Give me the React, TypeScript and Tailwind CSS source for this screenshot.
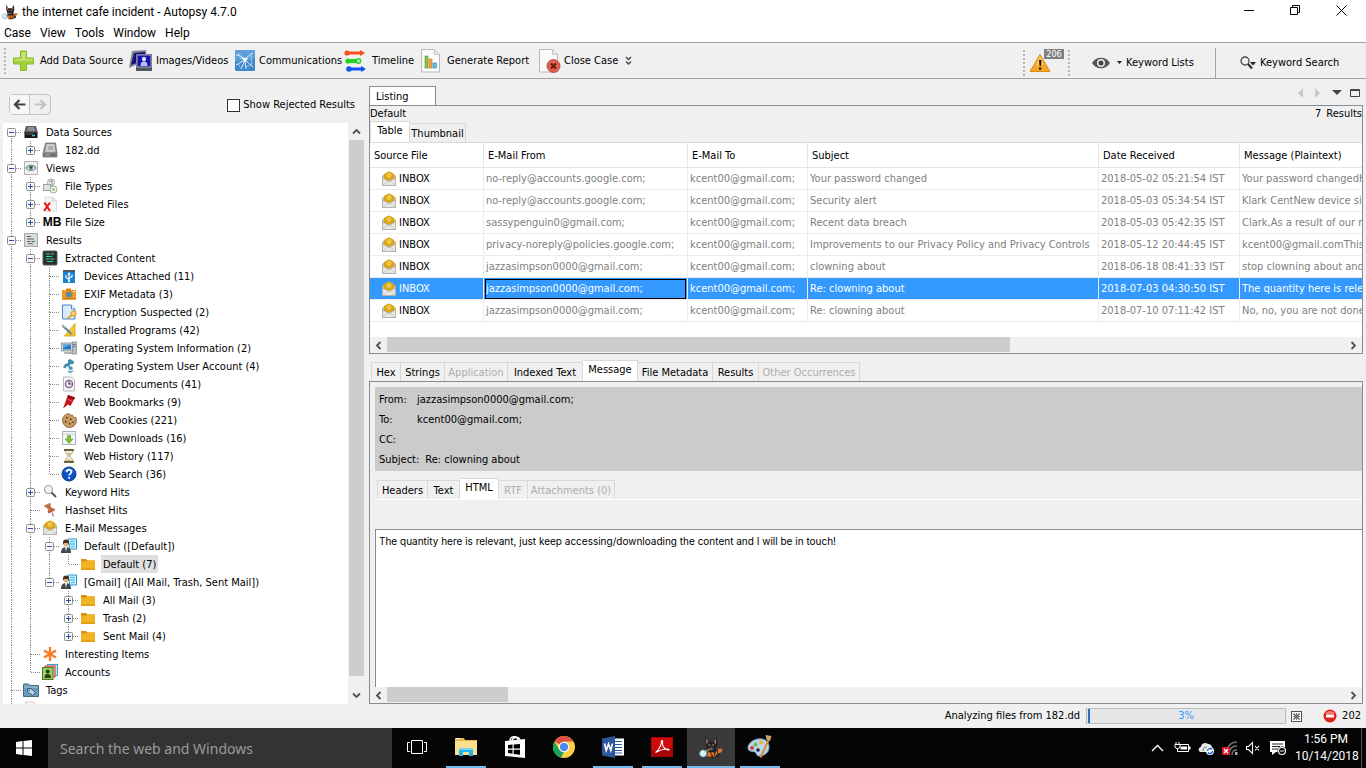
import type { ReactNode } from "react";
import { clsx } from "clsx";

/* ---------- icons ---------- */

function DogIcon({ size }: { size: number }) {
    return (
        <svg width={size} height={size} viewBox="0 0 22 22">
            <path d="M5.500 0.500l3 5.500h5l3-5 .5 7-1.500 5 3 2.500 1 3-5 2.500H9l-2-5 .5-3L6 8z" fill="#242126" />
            <path d="M6.300 2.500l2 4-1.300 2zM15.800 3l-2 3.500 1.500 2z" fill="#c47a70" />
            <path d="M8.700 8.700h1.500v1H8.700zM12.300 8.700h1.500v1h-1.500z" fill="#e8b468" />
            <path d="M9.500 11.500l1.700-1 1.800 1 .3 2.500h-4z" fill="#4b444c" />
            <path d="M10.300 12.500h2l-1 1.200z" fill="#9b959e" />
            <path d="M8 15l2.500 1.500 2-1 2 1 2-2 .5 3-3 3-2-1.500-2 1.500-2.500-1z" fill="#d9762b" />
            <path d="M17 12.500l4.500 0-.7 3-3.300 1.500z" fill="#d9762b" />
            <path d="M11 17l1.500 2.500M15 16l-1 3" stroke="#3a2212" />
            <path d="M6.500 15l3-2" stroke="#c9a04a" strokeWidth="1.200" />
            <circle cx="3.800" cy="17" r="3.200" fill="#d3f1f8" stroke="#5f99ad" strokeWidth="0.800" />
            <path d="M2 16.500c.3-1.300 1.200-1.800 2.200-1.800" stroke="#fff" fill="none" />
        </svg>
    );
}

function EnvelopeIcon() {
    return (
        <svg width="16" height="16" viewBox="0 0 16 16">
            <path d="M1.500 5L8 1l6.500 4v9.500h-13z" fill="#d8d8d4" stroke="#a5a5a0" strokeWidth="0.800" />
            <path d="M2.500 4L4 2.200l4-1.700 4 1.700L13.500 4v3.500L8 10 2.500 7.500z" fill="#dba514" />
            <circle cx="8" cy="4.500" r="1.900" fill="#e9bd3a" stroke="#f6dc7c" strokeWidth="0.800" />
            <path d="M1.500 7L8 10.500 14.500 7v7.500h-13z" fill="#e6e6e3" stroke="#a8a8a4" strokeWidth="0.700" />
            <path d="M2 14l5-4M14 14l-5-4" stroke="#c4c4c0" strokeWidth="0.700" />
        </svg>
    );
}

function FolderIcon() {
    return (
        <svg width="16" height="16" viewBox="0 0 16 16">
            <path d="M1 3h5l1.500 1.500H15V14H1z" fill="#d98f0c" />
            <path d="M1 5.500h5l1.500-1H15V14H1z" fill="#f0b323" />
            <path d="M1 12.500h14V14H1z" fill="#dd9c12" />
        </svg>
    );
}

function PersonIcon() {
    return (
        <svg width="16" height="16" viewBox="0 0 16 16">
            <path d="M7 1h8.500v10H9z" fill="#e9f9ff" stroke="#1b93c9" />
            <path d="M9 3.500h5M9 6h5M10 8.500h4" stroke="#3cc7ef" strokeWidth="1.300" />
            <circle cx="5" cy="4.500" r="3" fill="#4a2f1b" />
            <path d="M3 5h4v2.500L5 9 3 7.500z" fill="#e3b084" />
            <path d="M0 15c0-4 2-6 5-6s5 2 5 6z" fill="#3f4850" />
            <path d="M4 9l1 5 1-5z" fill="#fff" />
        </svg>
    );
}

const treeIcons: Record<string, ReactNode> = {
    drives: (
        <svg width="16" height="16" viewBox="0 0 16 16">
            <path d="M3 2h10l2 7H1z" fill="#5d6063" />
            <path d="M5 3h6l1 4H4z" fill="#8c9094" />
            <path d="M1.500 8.500h13V14h-13z" fill="#17191b" />
            <path d="M3 10h7" stroke="#5f6468" />
            <path d="M9 11.500h3" stroke="#38c7d0" strokeWidth="1.500" />
        </svg>
    ),
    disk: (
        <svg width="16" height="16" viewBox="0 0 16 16">
            <path d="M3.500 1h10l1.500 10v4H1v-4z" fill="#8d8d8d" stroke="#6a6a6a" strokeWidth="0.700" />
            <path d="M4.500 2h8l1 8h-10.500z" fill="#c6c6c6" />
            <ellipse cx="8.500" cy="6" rx="3.500" ry="2.800" fill="#aaa" stroke="#e4e4e4" strokeWidth="0.700" />
            <path d="M1.500 11.500h13v3h-13z" fill="#6f6f6f" />
            <path d="M3 13h5" stroke="#bbb" />
        </svg>
    ),
    views: (
        <svg width="16" height="16" viewBox="0 0 16 16">
            <rect x="1.500" y="1.500" width="13" height="13" fill="#f1f1f1" stroke="#b5b5b5" />
            <path d="M3 8c2.500-3.700 7.500-3.700 10 0-2.500 3.200-7.500 3.200-10 0z" fill="#fff" stroke="#6d7779" strokeWidth="1.200" />
            <circle cx="8" cy="7.600" r="2.200" fill="#4e8791" />
            <circle cx="8" cy="7.600" r="0.900" fill="#1b3034" />
        </svg>
    ),
    types: (
        <svg width="16" height="16" viewBox="0 0 16 16">
            <circle cx="9" cy="4.500" r="3.500" fill="#e9eded" stroke="#9da5a5" />
            <path d="M7 4l3-1.500V7" stroke="#8b9292" fill="none" />
            <rect x="1.500" y="6.500" width="7" height="6" fill="#dfe3e3" stroke="#9ba1a1" />
            <circle cx="11.500" cy="11.500" r="3.500" fill="#edf4e9" stroke="#9cae98" />
            <circle cx="11.500" cy="11.500" r="1.300" fill="#8ec76c" />
        </svg>
    ),
    deleted: (
        <svg width="16" height="16" viewBox="0 0 16 16">
            <path d="M3 1h7.500l4 4v10H3z" fill="#f5f5f5" stroke="#dcdcdc" />
            <path d="M10.500 1v4h4" fill="#e4e4e4" stroke="#d2d2d2" />
            <path d="M2.500 6.500l5.500 8.500M8 6.500L2 15" stroke="#f01010" strokeWidth="2" />
        </svg>
    ),
    results: (
        <svg width="16" height="16" viewBox="0 0 16 16">
            <rect x="1.500" y="1.500" width="13" height="13" fill="#dadada" stroke="#a5a5a5" />
            <path d="M4 4.500h4M4 7h7M4 9.500h3.500M8.500 9.500H12M5 11.800h5" stroke="#5d6063" strokeWidth="1.100" />
        </svg>
    ),
    extracted: (
        <svg width="16" height="16" viewBox="0 0 16 16">
            <rect x="1" y="1" width="14" height="14" rx="1" fill="#2c3033" stroke="#55595c" />
            <path d="M4 4h4M9 4h3M4 6.500h6M4 9h3M8 9h4M5 11.500h6" stroke="#35d69b" strokeWidth="1.200" />
        </svg>
    ),
    usb: (
        <svg width="16" height="16" viewBox="0 0 16 16">
            <rect x="2" y="2" width="12" height="13" fill="#1782cf" />
            <path d="M2 2h12v2H2z" fill="#4d5a64" />
            <path d="M8 5v9M8 11.500L5 9.500V7M8 10.500l3-2V6.500" stroke="#fff" strokeWidth="1.200" fill="none" />
            <path d="M6.500 6.500L8 4l1.500 2.500z" fill="#fff" />
            <circle cx="8" cy="13" r="1.200" fill="#fff" />
        </svg>
    ),
    camera: (
        <svg width="16" height="16" viewBox="0 0 16 16">
            <path d="M1 4h14v9.500H1z" fill="#f29a1f" />
            <path d="M5 2.500h5V5H5z" fill="#df8411" />
            <path d="M1 12h14v1.500H1z" fill="#d67a0c" />
            <circle cx="8" cy="8.500" r="3.600" fill="#a8876a" />
            <circle cx="8" cy="8.500" r="2.500" fill="#4d8fb3" />
            <path d="M12 5.500h2" stroke="#ffe5a8" />
        </svg>
    ),
    encryption: (
        <svg width="16" height="16" viewBox="0 0 16 16">
            <path d="M1.500 1h9l3.500 4v10H1.500z" fill="#d8eafb" stroke="#4a87c9" />
            <path d="M10.500 1v4h3.500" fill="#fff" stroke="#4a87c9" />
            <path d="M6.500 14.500l5-4" stroke="#e3a531" strokeWidth="2" />
            <circle cx="12.500" cy="9.500" r="2.500" fill="#ffd25e" stroke="#d9962a" />
        </svg>
    ),
    programs: (
        <svg width="16" height="16" viewBox="0 0 16 16">
            <path d="M14 1.500v12.500H3.500z" fill="#f3d028" stroke="#c69c10" strokeWidth="0.800" />
            <path d="M11.500 8v4H8z" fill="#fff8cf" stroke="#c69c10" strokeWidth="0.600" />
            <path d="M1.500 3.500l9 8.500" stroke="#6b8190" strokeWidth="2.200" />
            <path d="M1 2.500l3 3" stroke="#9dc0d8" strokeWidth="1.200" />
        </svg>
    ),
    computer: (
        <svg width="16" height="16" viewBox="0 0 16 16">
            <rect x="11" y="2" width="4.500" height="12" fill="#b9bdc1" stroke="#85898d" strokeWidth="0.700" />
            <path d="M12 4.500h2.500M12 6.500h2.500" stroke="#6e7276" />
            <rect x="0.500" y="3" width="11" height="8" fill="#d2d6d9" stroke="#84898d" strokeWidth="0.800" />
            <rect x="2" y="4.500" width="8" height="5" fill="#2379c7" />
            <path d="M2 4.500h8L2 8z" fill="#58a6e6" />
            <path d="M3 13h8" stroke="#9a9ea2" strokeWidth="1.500" />
        </svg>
    ),
    account: (
        <svg width="16" height="16" viewBox="0 0 16 16">
            <path d="M7 2l2.500-1 1.500 1.500 2 .5-.5 3-3.500.5-.5 2-3 0-1 2-2.500-1L4 6l3-1z" fill="#3f8fb0" />
            <path d="M7.500 8l3.500.500 1 2-2.500 2-2-2z" fill="#4c9dbd" />
            <path d="M7 13l2.500 1.500L12 12.500" stroke="#64a9c4" strokeWidth="1.600" fill="none" />
        </svg>
    ),
    recent: (
        <svg width="16" height="16" viewBox="0 0 16 16">
            <path d="M2.500 1h8l3 3v11h-11z" fill="#f4f4f4" stroke="#b9b9b9" />
            <circle cx="8" cy="8" r="3.600" fill="#efe4f3" stroke="#7c6486" strokeWidth="1.300" />
            <path d="M8 5.500V8h2.500" stroke="#4b3956" fill="none" strokeWidth="1.200" />
        </svg>
    ),
    bookmark: (
        <svg width="16" height="16" viewBox="0 0 16 16">
            <path d="M7 1l7 2.500L9.500 12 7 10.500 2 14.500z" fill="#c4161c" />
            <path d="M7 1l7 2.500-1 2-6.700-2.500z" fill="#8f0d12" />
            <path d="M7 5.500l4 1.500" stroke="#e7575b" />
        </svg>
    ),
    cookie: (
        <svg width="16" height="16" viewBox="0 0 16 16">
            <path d="M8 1.500c1 1.500 2.500 2 3.500 1.500.5 2 1.500 2.700 3.300 2.500A7 7 0 1 1 8 1.500z" fill="#c79b62" stroke="#8a6233" strokeWidth="0.900" />
            <path d="M5 5h1.500v1.500H5zM9 6.500h1.500V8H9zM4 9h1.500v1.500H4zM8 11h1.500v1.500H8zM11.500 9.500H13V11h-1.500z" fill="#4f3114" />
        </svg>
    ),
    download: (
        <svg width="16" height="16" viewBox="0 0 16 16">
            <rect x="1.500" y="1.500" width="13" height="13" fill="#f5f7f8" stroke="#a9b2b8" />
            <path d="M1.500 4h13" stroke="#c5ccd1" />
            <path d="M6.500 5.500h3V9H12l-4 4.500L4 9h2.500z" fill="#7cc038" stroke="#589420" strokeWidth="0.600" />
        </svg>
    ),
    history: (
        <svg width="16" height="16" viewBox="0 0 16 16">
            <path d="M4 2.500h8c0 3-2.500 4-3.500 5.500 1 1.500 3.500 2.500 3.500 5.500H4c0-3 2.500-4 3.500-5.500C6.500 6.500 4 5.500 4 2.500z" fill="#f5efdd" stroke="#9a9078" strokeWidth="0.800" />
            <path d="M3 2h10M3 14h10" stroke="#6f6247" strokeWidth="1.800" />
            <path d="M5.500 5h5L8 7.500zM5 13c1-2 5-2 6 0z" fill="#d2b565" />
        </svg>
    ),
    search: (
        <svg width="16" height="16" viewBox="0 0 16 16">
            <circle cx="8" cy="8" r="7" fill="#0f52c4" stroke="#0a3384" />
            <path d="M3 5.500c2-4 8-4 10 0-3-1-7-1-10 0z" fill="#5a9bf0" />
            <path d="M5.800 6.200c0-3 4.600-3 4.600-.2 0 1.800-2.300 1.800-2.300 3.500" stroke="#fff" strokeWidth="1.700" fill="none" />
            <path d="M7.200 11h1.800v1.800H7.200z" fill="#fff" />
        </svg>
    ),
    keyword: (
        <svg width="16" height="16" viewBox="0 0 16 16">
            <circle cx="6.500" cy="5.500" r="4" fill="#eef3f5" stroke="#a0a6a9" strokeWidth="1.200" />
            <path d="M9.500 8.500l4.500 4.500" stroke="#53575a" strokeWidth="2" />
        </svg>
    ),
    pin: (
        <svg width="16" height="16" viewBox="0 0 16 16">
            <path d="M2 3.500l6-2.500 1 1.500-1 1.500 2.500 2.500h2l.5 2-6.500 3-1-2 1-1.500L4.500 5.500 3 5z" fill="#b9603a" />
            <path d="M3.500 3.800l4-1.500M6 5.500l2.500 3" stroke="#df9672" />
            <path d="M10 10.500l1.500 4" stroke="#888" strokeWidth="1.200" />
        </svg>
    ),
    star: (
        <svg width="16" height="16" viewBox="0 0 16 16">
            <path d="M8 1v14M2 4.500l12 7M2 11.500l12-7" stroke="#f47b29" strokeWidth="2.400" />
        </svg>
    ),
    accounts: (
        <svg width="16" height="16" viewBox="0 0 16 16">
            <rect x="5.500" y="0.500" width="10" height="11" fill="#bfe5f7" stroke="#3d9fd0" />
            <rect x="3" y="2" width="10" height="11" fill="#f7bdb8" stroke="#d9362c" />
            <rect x="0.500" y="3.500" width="10.500" height="12" fill="#9bd067" stroke="#467c1c" />
            <circle cx="5.700" cy="7.500" r="2" fill="#283d18" />
            <path d="M2.500 14c0-3 1-4 3.200-4S9 11 9 14z" fill="#283d18" />
        </svg>
    ),
    tags: (
        <svg width="16" height="16" viewBox="0 0 16 16">
            <path d="M0.500 3.500V2h5l1 1.500h9v11h-15z" fill="#6a9bbd" stroke="#40687f" />
            <path d="M1 5h14" stroke="#a3c6dc" />
            <path d="M4.500 6.500h3.500l4.500 4-3 3-5-4z" fill="#b8d5e6" stroke="#2f5166" strokeWidth="0.900" />
            <circle cx="6.300" cy="8.300" r="0.700" fill="#2f5166" />
        </svg>
    ),
    report: (
        <svg width="16" height="16" viewBox="0 0 16 16">
            <path d="M2.500 2h8l3 3v10h-11z" fill="#f7f7f7" stroke="#cfcfcf" />
        </svg>
    ),
    size: <span className="ml-1 font-['Liberation_Sans',sans-serif] text-[12px] font-bold text-black">MB</span>,
    mail: <EnvelopeIcon />,
    person: <PersonIcon />,
    folder: <FolderIcon />,
};

/* ---------- tree ---------- */

type TreeRow = {
    depth: number;
    icon: string;
    label: string;
    toggle?: "+" | "-";
    selected?: boolean;
};

const treeRows: TreeRow[] = [
    { depth: 0, icon: "drives", label: "Data Sources", toggle: "-" },
    { depth: 1, icon: "disk", label: "182.dd", toggle: "+" },
    { depth: 0, icon: "views", label: "Views", toggle: "-" },
    { depth: 1, icon: "types", label: "File Types", toggle: "+" },
    { depth: 1, icon: "deleted", label: "Deleted Files", toggle: "+" },
    { depth: 1, icon: "size", label: "File Size", toggle: "+" },
    { depth: 0, icon: "results", label: "Results", toggle: "-" },
    { depth: 1, icon: "extracted", label: "Extracted Content", toggle: "-" },
    { depth: 2, icon: "usb", label: "Devices Attached (11)" },
    { depth: 2, icon: "camera", label: "EXIF Metadata (3)" },
    { depth: 2, icon: "encryption", label: "Encryption Suspected (2)" },
    { depth: 2, icon: "programs", label: "Installed Programs (42)" },
    { depth: 2, icon: "computer", label: "Operating System Information (2)" },
    { depth: 2, icon: "account", label: "Operating System User Account (4)" },
    { depth: 2, icon: "recent", label: "Recent Documents (41)" },
    { depth: 2, icon: "bookmark", label: "Web Bookmarks (9)" },
    { depth: 2, icon: "cookie", label: "Web Cookies (221)" },
    { depth: 2, icon: "download", label: "Web Downloads (16)" },
    { depth: 2, icon: "history", label: "Web History (117)" },
    { depth: 2, icon: "search", label: "Web Search (36)" },
    { depth: 1, icon: "keyword", label: "Keyword Hits", toggle: "+" },
    { depth: 1, icon: "pin", label: "Hashset Hits" },
    { depth: 1, icon: "mail", label: "E-Mail Messages", toggle: "-" },
    { depth: 2, icon: "person", label: "Default ([Default])", toggle: "-" },
    { depth: 3, icon: "folder", label: "Default (7)", selected: true },
    { depth: 2, icon: "person", label: "[Gmail] ([All Mail, Trash, Sent Mail])", toggle: "-" },
    { depth: 3, icon: "folder", label: "All Mail (3)", toggle: "+" },
    { depth: 3, icon: "folder", label: "Trash (2)", toggle: "+" },
    { depth: 3, icon: "folder", label: "Sent Mail (4)", toggle: "+" },
    { depth: 1, icon: "star", label: "Interesting Items" },
    { depth: 1, icon: "accounts", label: "Accounts" },
    { depth: 0, icon: "tags", label: "Tags" },
    { depth: 0, icon: "report", label: "" },
];

// true when another node of the same depth follows under the same parent
function continues(index: number, depth: number) {
    for (let i = index + 1; i < treeRows.length; i++) {
        if (treeRows[i].depth === depth) return true;
        if (treeRows[i].depth < depth) return false;
    }
    return false;
}

function Branch({ index, depth }: { index: number; depth: number }) {
    const row = treeRows[index];
    const own = row.depth === depth;
    const next = continues(index, depth);
    const top = own && index > 0;

    return (
        <svg width="19" height="18" viewBox="0 0 19 18" className="shrink-0">
            <g stroke="#8a8a8a" strokeDasharray="1 1">
                {(top || (!own && next)) && <path d="M8.500 0v9" />}
                {next && <path d="M8.500 9v9" />}
                {own && <path d="M9 9.500h10" />}
            </g>
            {own && row.toggle && (
                <>
                    <rect x="4.500" y="5.500" width="8" height="8" rx="1" fill="#f6f6f6" stroke="#8e8e8e" />
                    <path d="M6 9.500h5" stroke="#2f4fae" />
                    {row.toggle === "+" && <path d="M8.500 7v5" stroke="#2f4fae" />}
                </>
            )}
        </svg>
    );
}

function Tree() {
    return (
        <ul className="min-w-0 flex-1 overflow-hidden bg-white">
            {treeRows.map((row, index) => (
                <li key={index} className="flex h-[18px] items-center">
                    {Array.from({ length: row.depth }, (_, depth) => (
                        <Branch key={depth} index={index} depth={depth} />
                    ))}
                    {row.toggle ? (
                        <button type="button" aria-label={row.label} className="shrink-0">
                            <Branch index={index} depth={row.depth} />
                        </button>
                    ) : (
                        <Branch index={index} depth={row.depth} />
                    )}
                    <span className="mr-1 flex w-[18px] shrink-0 justify-center">{treeIcons[row.icon]}</span>
                    <span
                        className={clsx(
                            "flex h-[18px] items-center whitespace-nowrap px-0.5 pt-0.5",
                            row.selected && "bg-[#dfdfdf]"
                        )}
                    >
                        {row.label}
                    </span>
                </li>
            ))}
        </ul>
    );
}

/* ---------- scrollbars ---------- */

function Arrow({ d }: { d: string }) {
    return (
        <svg width="9" height="9" viewBox="0 0 9 9">
            <path d={d} fill="none" stroke="#505050" strokeWidth="1.800" />
        </svg>
    );
}

function HorizontalScroll({ thumb }: { thumb: string }) {
    return (
        <div className="flex h-4 shrink-0 bg-[#f0f0f0]">
            <button type="button" aria-label="Scroll left" className="flex w-[17px] items-center justify-center">
                <Arrow d="M6.500 1L3 4.500 6.500 8" />
            </button>
            <div className="flex-1">
                <div className={clsx("h-[15px] bg-[#cdcdcd]", thumb)} />
            </div>
            <button type="button" aria-label="Scroll right" className="flex w-[17px] items-center justify-center">
                <Arrow d="M2.500 1L6 4.500 2.500 8" />
            </button>
        </div>
    );
}

/* ---------- window bars ---------- */

function TitleBar() {
    return (
        <div className="flex h-6 shrink-0 items-center bg-white pl-0.5 font-['Roboto','Noto_Sans',sans-serif] text-[12px]">
            <DogIcon size={16} />
            <span className="ml-1 flex-1">the internet cafe incident - Autopsy 4.7.0</span>
            <div className="flex pb-1 pr-0.5">
                <button type="button" aria-label="Minimize" className="flex w-[46px] justify-center">
                    <svg width="11" height="11" viewBox="0 0 11 11">
                        <path d="M0 5.500h10" stroke="#000" />
                    </svg>
                </button>
                <button type="button" aria-label="Restore" className="flex w-[46px] justify-center">
                    <svg width="11" height="11" viewBox="0 0 11 11">
                        <path d="M0.500 2.500h7v7h-7zM2.500 2V0.500h7v7H8" fill="none" stroke="#000" />
                    </svg>
                </button>
                <button type="button" aria-label="Close" className="flex w-[46px] justify-center">
                    <svg width="11" height="11" viewBox="0 0 11 11">
                        <path d="M0.500 0.500l10 10M10.500 0.500l-10 10" stroke="#000" />
                    </svg>
                </button>
            </div>
        </div>
    );
}

function MenuBar() {
    return (
        <nav className="flex h-[18px] shrink-0 items-center gap-[9px] bg-white pl-1 font-['Roboto','Noto_Sans',sans-serif] text-[12px]">
            {["Case", "View", "Tools", "Window", "Help"].map((menu) => (
                <button key={menu} type="button">
                    {menu}
                </button>
            ))}
        </nav>
    );
}

function Grip() {
    return <div className="h-[26px] w-0.5 shrink-0 border-l-2 border-dotted border-[#b4b4b4]" />;
}

type ToolProps = {
    label: string;
    width: string;
    iconWidth: string;
    icon: ReactNode;
};

function Tool({ label, width, iconWidth, icon }: ToolProps) {
    return (
        <button type="button" className={clsx("flex shrink-0 items-center whitespace-nowrap", width)}>
            <span className={clsx("flex shrink-0", iconWidth)}>{icon}</span>
            {label}
        </button>
    );
}

function Toolbar() {
    return (
        <div className="flex h-[37px] shrink-0 items-center border-y border-[#a3a3a3] bg-[#f0f0f0]">
            <div className="flex h-full flex-1 items-center pl-1">
                <Grip />
                <div className="ml-[7px] flex">
                    <Tool
                        label="Add Data Source"
                        width="w-[116px]"
                        iconWidth="w-[27px]"
                        icon={
                            <svg width="21" height="22" viewBox="0 0 21 22">
                                <path d="M7.500 1h6v7h7v6h-7v6.500h-6V14h-7V8h7z" fill="#a5d13c" stroke="#8bb92a" />
                                <path d="M8.500 2h4v7h7v1.500H1.500V9h7z" fill="#c6e676" />
                            </svg>
                        }
                    />
                    <Tool
                        label="Images/Videos"
                        width="w-[106px]"
                        iconWidth="w-[27px]"
                        icon={
                            <svg width="24" height="24" viewBox="0 0 24 24">
                                <path d="M3 2l14-1 1 10L0 19z" fill="#85878f" />
                                <path d="M5 4l11-1v8L2 16z" fill="#14137c" />
                                <rect x="7" y="5" width="16" height="17" fill="#54565e" />
                                <rect x="8" y="6" width="14" height="12" fill="#1712a3" stroke="#c8cad4" strokeWidth="0.800" />
                                <circle cx="15" cy="10" r="2.200" fill="#d9dcff" />
                                <path d="M11.500 17c0-3.500 1-4.500 3.500-4.500s3.500 1 3.500 4.500z" fill="#b8bcff" />
                            </svg>
                        }
                    />
                    <Tool
                        label="Communications"
                        width="w-[109px]"
                        iconWidth="w-6"
                        icon={
                            <svg width="20" height="21" viewBox="0 0 20 21">
                                <rect width="20" height="21" rx="1.500" fill="#3f87cb" />
                                <path d="M0 1.500C0 .5.500 0 1.500 0h17c1 0 1.500.500 1.500 1.500V8C13 13 6 10 0 12z" fill="#5c9fd9" />
                                <path d="M1 5c4 0 7 2 9 5M18 3c-3 1-6 4-8 7M1 15l9-5 8 7M10 10l-4 9M10 10l1 9" stroke="#e4f2fc" fill="none" />
                                <path d="M3 3l3 6M16 5l1 9M11 17l6-3M5 17l-2-4" stroke="#b4d6f1" strokeWidth="0.800" fill="none" />
                                <path d="M6 7.500l7 .500-2.500 4z" fill="#fff" />
                            </svg>
                        }
                    />
                    <Tool
                        label="Timeline"
                        width="w-[76px]"
                        iconWidth="w-7"
                        icon={
                            <svg width="23" height="24" viewBox="0 0 23 24">
                                <path d="M3 4h16" stroke="#f4511e" strokeWidth="3" />
                                <path d="M3 12h12" stroke="#1fd61f" strokeWidth="4" />
                                <path d="M5 20h15" stroke="#1256f0" strokeWidth="3" />
                                <circle cx="3" cy="4" r="2.600" fill="#f4511e" />
                                <path d="M16 1l5 3-5 3z" fill="#f4511e" />
                                <circle cx="4" cy="12" r="2.600" fill="#1fd61f" />
                                <circle cx="14.500" cy="12" r="2.200" fill="#dff5df" stroke="#1fd61f" strokeWidth="1.500" />
                                <circle cx="5" cy="20" r="2.800" fill="#1256f0" />
                                <path d="M17 17l5 3-5 3z" fill="#1256f0" />
                            </svg>
                        }
                    />
                    <Tool
                        label="Generate Report"
                        width="w-[118px]"
                        iconWidth="w-[27px]"
                        icon={
                            <svg width="22" height="26" viewBox="0 0 22 26">
                                <path d="M1.500 1.500h13l5 5v17.500h-18z" fill="#fafafa" stroke="#b9b9b9" />
                                <path d="M14.500 1.500v5h5" fill="#e8e8e8" stroke="#c6c6c6" />
                                <rect x="5" y="8" width="3" height="12" fill="#8bc34a" stroke="#5f9426" strokeWidth="0.600" />
                                <rect x="9" y="11" width="3" height="9" fill="#f4a14a" stroke="#c1721d" strokeWidth="0.600" />
                                <rect x="13" y="15" width="3.500" height="5" fill="#5ebfe6" stroke="#2c8db5" strokeWidth="0.600" />
                            </svg>
                        }
                    />
                    <Tool
                        label="Close Case"
                        width="w-[87px]"
                        iconWidth="w-[26px]"
                        icon={
                            <svg width="23" height="26" viewBox="0 0 23 26">
                                <path d="M1.500 1.500h13l5 5v17.500h-18z" fill="#fafafa" stroke="#b9b9b9" />
                                <path d="M14.500 1.500v5h5" fill="#e8e8e8" stroke="#c6c6c6" />
                                <circle cx="15.500" cy="18" r="6.500" fill="#e0604f" stroke="#b8402f" strokeWidth="0.800" />
                                <path d="M13 15.500l5 5M18 15.500l-5 5" stroke="#6e1d13" strokeWidth="2.200" />
                            </svg>
                        }
                    />
                    <button type="button" aria-label="More tools">
                        <svg width="7" height="10" viewBox="0 0 7 10">
                            <path d="M1 1l2.500 2.500L6 1M1 5.500L3.500 8 6 5.500" stroke="#444" strokeWidth="1.300" fill="none" />
                        </svg>
                    </button>
                </div>
            </div>
            <div className="flex h-full shrink-0 items-center pt-[5px]">
                <Grip />
                <button type="button" aria-label="Warnings" className="relative ml-[3px] flex h-[26px] w-10 items-center">
                    <svg width="24" height="20" viewBox="0 0 22 20">
                        <path d="M11 1.500L21 18.500H1z" fill="#f5a623" stroke="#d98a1a" strokeLinejoin="round" />
                        <path d="M11 3l4 8c-3 2-6 2-8 1z" fill="#fbc763" />
                        <path d="M10 7h2.500l-.5 6h-1.500zM10 14.500h2.200v2.200H10z" fill="#2a1a00" />
                    </svg>
                    <span className="absolute -top-px left-4 w-5 bg-[#808080] text-center text-[9px] leading-[10px] text-white">
                        206
                    </span>
                </button>
                <Grip />
                <button type="button" className="ml-[22px] flex w-[123px] items-center">
                    <svg width="18" height="12" viewBox="0 0 18 12" className="mr-[7px]">
                        <path d="M0 6c4-7 14-7 18 0-4 7-14 7-18 0z" fill="#555" />
                        <circle cx="9" cy="6" r="4" fill="#efefef" />
                        <circle cx="9" cy="6" r="2.500" fill="#444" />
                    </svg>
                    <svg width="5" height="4" viewBox="0 0 5 4" className="mr-1">
                        <path d="M0 0h5L2.500 3z" fill="#222" />
                    </svg>
                    Keyword Lists
                </button>
                <div className="h-full w-px bg-[#a3a3a3]" />
                <button type="button" className="ml-6 flex w-[126px] items-center">
                    <svg width="16" height="14" viewBox="0 0 16 14" className="mr-1">
                        <circle cx="5" cy="5" r="4" fill="none" stroke="#4d4d4d" strokeWidth="1.300" />
                        <path d="M8 8l4 4.500" stroke="#333" strokeWidth="2.200" />
                        <path d="M10 6h6l-3 3.500z" fill="#222" />
                    </svg>
                    Keyword Search
                </button>
            </div>
        </div>
    );
}

/* ---------- left pane ---------- */

function Explorer() {
    return (
        <aside className="flex w-[365px] shrink-0 flex-col">
            <div className="flex h-11 shrink-0 items-center justify-between pl-[9px] pr-2.5 pt-1.5">
                <div className="flex h-[21px] rounded-sm border border-[#c4c4c4]">
                    <button type="button" aria-label="Back" className="flex w-5 items-center justify-center border-r border-[#c4c4c4] bg-[#f8f8f8]">
                        <svg width="13" height="11" viewBox="0 0 13 11">
                            <path d="M12.500 5.500H2M6.500 1L2 5.500 6.500 10" stroke="#444" strokeWidth="2.200" fill="none" />
                        </svg>
                    </button>
                    <button type="button" aria-label="Forward" className="flex w-5 items-center justify-center">
                        <svg width="13" height="11" viewBox="0 0 13 11">
                            <path d="M0.500 5.500H11M6.500 1L11 5.500 6.500 10" stroke="#c2c2c2" strokeWidth="2.200" fill="none" />
                        </svg>
                    </button>
                </div>
                <label className="flex items-center gap-[3px] pt-0.5">
                    <input type="checkbox" className="size-[13px] appearance-none border border-[#333] bg-white" />
                    Show Rejected Results
                </label>
            </div>
            <div className="flex min-h-0 flex-1 pl-[3px]">
                <Tree />
                <div className="flex w-[17px] shrink-0 flex-col items-center bg-[#f0f0f0]">
                    <button type="button" aria-label="Scroll up" className="flex h-[17px] items-center">
                        <Arrow d="M1 6.500L4.500 3 8 6.500" />
                    </button>
                    <div className="w-[15px] flex-1 pb-[11px]">
                        <div className="h-full bg-[#cdcdcd]" />
                    </div>
                    <button type="button" aria-label="Scroll down" className="flex h-[17px] items-center">
                        <Arrow d="M1 2.500L4.500 6 8 2.500" />
                    </button>
                </div>
            </div>
        </aside>
    );
}

/* ---------- listing ---------- */

const messages = [
    { from: "no-reply@accounts.google.com;", subject: "Your password changed", date: "2018-05-02 05:21:54 IST", text: "Your password changedH" },
    { from: "no-reply@accounts.google.com;", subject: "Security alert", date: "2018-05-03 05:34:54 IST", text: "Klark CentNew device sig" },
    { from: "sassypenguin0@gmail.com;", subject: "Recent data breach", date: "2018-05-03 05:42:35 IST", text: "Clark,As a result of our r" },
    { from: "privacy-noreply@policies.google.com;", subject: "Improvements to our Privacy Policy and Privacy Controls", date: "2018-05-12 20:44:45 IST", text: "kcent00@gmail.comThis r" },
    { from: "jazzasimpson0000@gmail.com;", subject: "clowning about", date: "2018-06-18 08:41:33 IST", text: "stop clowning about and" },
    { from: "jazzasimpson0000@gmail.com;", subject: "Re: clowning about", date: "2018-07-03 04:30:50 IST", text: "The quantity here is relev" },
    { from: "jazzasimpson0000@gmail.com;", subject: "Re: clowning about", date: "2018-07-10 07:11:42 IST", text: "No, no, you are not done" },
];

const SELECTED = 5;

function MessageTable() {
    const cell = "overflow-hidden whitespace-nowrap border-b border-r border-[#ebebeb] p-0 pl-0.5";

    return (
        <table className="w-full table-fixed border-separate border-spacing-0">
            <colgroup>
                <col className="w-[114px]" />
                <col className="w-[204px]" />
                <col className="w-[120px]" />
                <col className="w-[291px]" />
                <col className="w-[141px]" />
                <col />
            </colgroup>
            <thead>
                <tr className="h-[25px] text-left">
                    {["Source File", "E-Mail From", "E-Mail To", "Subject", "Date Received", "Message (Plaintext)"].map((title) => (
                        <th key={title} className="overflow-hidden whitespace-nowrap border-b border-r border-[#e5e5e5] p-0 pl-1 pt-0.5 font-normal last:border-r-0">
                            {title}
                        </th>
                    ))}
                </tr>
            </thead>
            <tbody>
                {messages.map((message, index) => {
                    const selected = index === SELECTED;
                    return (
                        <tr key={index} className={clsx("h-[22px]", selected ? "bg-[#3399ff] text-white" : "text-[#808080]")}>
                            <td className={cell}>
                                <div className={clsx("flex items-center gap-0.5 pl-[9px]", !selected && "text-black")}>
                                    <EnvelopeIcon />
                                    INBOX
                                </div>
                            </td>
                            {selected ? (
                                <td className="overflow-hidden whitespace-nowrap border-b border-r border-[#ebebeb] p-0">
                                    <div className="mx-px flex h-5 items-center border border-black">{message.from}</div>
                                </td>
                            ) : (
                                <td className={cell}>{message.from}</td>
                            )}
                            <td className={cell}>kcent00@gmail.com;</td>
                            <td className={cell}>{message.subject}</td>
                            <td className={cell}>{message.date}</td>
                            <td className={clsx(cell, "border-r-0")}>{message.text}</td>
                        </tr>
                    );
                })}
            </tbody>
        </table>
    );
}

type TabItem = {
    label: string;
    width: string;
    state?: "active" | "disabled";
};

function TabStrip({ tabs }: { tabs: TabItem[] }) {
    return (
        <div className="flex items-end">
            {tabs.map((tab, index) => (
                <button
                    key={tab.label}
                    type="button"
                    disabled={tab.state === "disabled"}
                    className={clsx(
                        "shrink-0 whitespace-nowrap border-r border-t border-[#d9d9d9] text-center",
                        tab.width,
                        index === 0 && "border-l",
                        tab.state === "active" ? "h-[21px] bg-white pb-0.5" : "h-[19px] bg-[#f0f0f0] pt-px",
                        tab.state === "disabled" && "text-[#adadad]"
                    )}
                >
                    {tab.label}
                </button>
            ))}
        </div>
    );
}

function Listing() {
    return (
        <section className="flex h-[268px] shrink-0 flex-col">
            <div className="flex h-[19px] shrink-0 items-start justify-between">
                <button type="button" className="h-5 w-[67px] border-l border-r border-t border-[#898c95] bg-white pl-1.5 text-left">
                    Listing
                </button>
                <svg width="66" height="10" viewBox="0 0 66 10" className="mr-0.5 mt-0.5">
                    <path d="M8 0v10L3 5zM20 0v10l5-5z" fill="#c9c9c9" />
                    <path d="M37 2h10l-5 5z" fill="#444" />
                    <path d="M55.500 1.500h9v7h-9zM55 2.500h10" fill="none" stroke="#444" />
                </svg>
            </div>
            <div className="flex min-h-0 flex-1 flex-col border border-[#898c95]">
                <div className="flex h-[15px] shrink-0 items-center justify-between">
                    <span>Default</span>
                    <span className="flex gap-[5px]">
                        <span>7</span>
                        <span>Results</span>
                    </span>
                </div>
                <div className="border-b border-[#d9d9d9]">
                    <TabStrip
                        tabs={[
                            { label: "Table", width: "w-10", state: "active" },
                            { label: "Thumbnail", width: "w-14" },
                        ]}
                    />
                </div>
                <div className="min-h-0 flex-1 overflow-hidden bg-white">
                    <MessageTable />
                </div>
                <HorizontalScroll thumb="w-[65%]" />
            </div>
        </section>
    );
}

/* ---------- message viewer ---------- */

const mailHeaders = [
    { label: "From:", value: "jazzasimpson0000@gmail.com;" },
    { label: "To:", value: "kcent00@gmail.com;" },
    { label: "CC:", value: "" },
    { label: "Subject:", value: "Re: clowning about" },
];

function MessageViewer() {
    return (
        <section className="flex min-h-0 flex-1 flex-col pt-1.5">
            <div className="pl-0.5">
                <TabStrip
                    tabs={[
                        { label: "Hex", width: "w-[30px]" },
                        { label: "Strings", width: "w-11" },
                        { label: "Application", width: "w-[63px]", state: "disabled" },
                        { label: "Indexed Text", width: "w-[75px]" },
                        { label: "Message", width: "w-[55px]", state: "active" },
                        { label: "File Metadata", width: "w-[75px]" },
                        { label: "Results", width: "w-[46px]" },
                        { label: "Other Occurrences", width: "w-[101px]", state: "disabled" },
                    ]}
                />
            </div>
            <div className="flex min-h-0 flex-1 flex-col border border-[#898c95]">
                <div className="flex min-h-0 flex-1 flex-col pl-[5px] pt-[5px]">
                    <dl className="bg-[#cbcbcb] px-1 pb-px pt-[3px]">
                        {mailHeaders.map((header) => (
                            <div key={header.label} className="flex h-5 items-center gap-1.5">
                                <dt className="min-w-8">{header.label}</dt>
                                <dd>{header.value}</dd>
                            </div>
                        ))}
                    </dl>
                    <div className="mt-[7px] border-b border-white pl-0.5">
                        <TabStrip
                            tabs={[
                                { label: "Headers", width: "w-[51px]" },
                                { label: "Text", width: "w-8" },
                                { label: "HTML", width: "w-[39px]", state: "active" },
                                { label: "RTF", width: "w-[29px]", state: "disabled" },
                                { label: "Attachments (0)", width: "w-[87px]", state: "disabled" },
                            ]}
                        />
                    </div>
                    <p className="mt-[29px] flex-1 border-l border-t border-[#898c95] bg-white pl-[3px] pt-1 font-['Inter','Liberation_Sans',sans-serif] text-[10px] leading-[14px]">
                        The quantity here is relevant, just keep accessing/downloading the content and I will be in touch!
                    </p>
                </div>
                <HorizontalScroll thumb="w-[121px]" />
            </div>
        </section>
    );
}

function StatusBar() {
    return (
        <footer className="flex h-6 shrink-0 items-center justify-end bg-[#f0f0f0] pr-[5px]">
            <span>Analyzing files from 182.dd</span>
            <div
                role="progressbar"
                aria-valuenow={3}
                className="relative ml-1.5 flex h-4 w-[200px] items-center justify-center border border-[#bcbcbc] bg-[#e6e6e6] text-[#3399ff]"
            >
                <div className="absolute inset-y-0 left-px w-0.5 bg-[#316ac5]" />
                3%
            </div>
            <button type="button" aria-label="Cancel" className="ml-[5px]">
                <svg width="11" height="11" viewBox="0 0 11 11">
                    <rect x="0.500" y="0.500" width="10" height="10" fill="#fff" stroke="#555" />
                    <path d="M2.500 2.500l6 6M8.500 2.500l-6 6" stroke="#555" strokeWidth="1.400" />
                    <path d="M5.500 2v2M5.500 7v2M2 5.500h2M7 5.500h2" stroke="#777" />
                </svg>
            </button>
            <svg width="14" height="14" viewBox="0 0 14 14" className="ml-[21px] mr-[5px]">
                <circle cx="7" cy="7" r="6.500" fill="#e0201b" />
                <path d="M2 5c2-4 8-4 10 0z" fill="#f27b74" />
                <rect x="3" y="5.500" width="8" height="3" fill="#fff" />
            </svg>
            <span>202</span>
        </footer>
    );
}

/* ---------- windows taskbar ---------- */

const apps: { name: string; open?: boolean; active?: boolean; icon: ReactNode }[] = [
    {
        name: "Task View",
        icon: (
            <svg width="20" height="14" viewBox="0 0 20 14">
                <path d="M4.500 0.500h11v13h-11zM3 2.500H0.500v9H3M17 2.500h2.500v9H17" fill="none" stroke="#fff" />
            </svg>
        ),
    },
    {
        name: "File Explorer",
        open: true,
        icon: (
            <svg width="22" height="20" viewBox="0 0 22 20">
                <path d="M0 1h9l1 2h12v15H0z" fill="#e9b94e" />
                <path d="M0 4h22v14H0z" fill="#fbe08b" />
                <path d="M1 1.500h4" stroke="#fff" />
                <path d="M4 11h14v8h-4v-4H8v4H4z" fill="#23b4ef" />
                <path d="M4 11h14v2H4z" fill="#7cd5f8" />
            </svg>
        ),
    },
    {
        name: "Store",
        icon: (
            <svg width="22" height="24" viewBox="0 0 22 24">
                <path d="M6 6c0-5 7-6 8-1M8 6c0-3 6-6 8-1" fill="none" stroke="#fff" strokeWidth="1.400" />
                <path d="M1 6l20-2v19L1 21z" fill="#fff" />
                <path d="M4 10l4.500-.5v4H4zM9.700 9.400L16 9v4.500H9.700zM4 14.700h4.500v4L4 18zM9.700 14.700H16v5l-6.300-.7z" fill="#000" />
            </svg>
        ),
    },
    {
        name: "Chrome",
        icon: (
            <svg width="22" height="22" viewBox="0 0 22 22">
                <circle cx="11" cy="11" r="11" fill="#ffcd46" />
                <path d="M11 11L1.500 5.500A11 11 0 0 1 20.500 5.500H11z" fill="#de5246" />
                <path d="M1.500 5.500l4.800 8.200 4.700 2.300-3 5.600A11 11 0 0 1 1.500 5.500z" fill="#1aa260" />
                <circle cx="11" cy="11" r="5.200" fill="#fff" />
                <circle cx="11" cy="11" r="4.200" fill="#4a8af4" />
            </svg>
        ),
    },
    {
        name: "Word",
        open: true,
        icon: (
            <svg width="22" height="22" viewBox="0 0 22 22">
                <rect x="11" y="2.500" width="11" height="17" fill="#fff" />
                <path d="M13 5.500h7M13 8.500h7M13 11.500h7M13 14.500h7M13 17h7" stroke="#2b579a" />
                <path d="M0 2.500L13 0v22L0 19.500z" fill="#2b579a" />
                <path d="M2.500 7.500l1.700 7 2.300-6.500 2.300 6.500 1.700-7" fill="none" stroke="#fff" strokeWidth="1.600" />
            </svg>
        ),
    },
    {
        name: "Adobe Reader",
        open: true,
        icon: (
            <svg width="22" height="20" viewBox="0 0 22 20">
                <rect width="22" height="20" fill="#a80606" />
                <path d="M1 1h20v9L1 14z" fill="#d00b0b" />
                <path d="M4.500 15.500c2.500-1.500 6-7 6-11 0-1.500 1.500-1.500 1 .5-.8 4 2.500 7.500 5.500 8 1.500.2 1.500-1 0-1-3.500-.2-8 1-12.500 3.500z" fill="none" stroke="#fff" strokeWidth="1.100" />
            </svg>
        ),
    },
    { name: "Autopsy", open: true, active: true, icon: <DogIcon size={24} /> },
    {
        name: "Paint",
        open: true,
        icon: (
            <svg width="26" height="24" viewBox="0 0 26 24">
                <path d="M11 4c7-1 11 3 11 8s-4 9-10 9c-3 0-2-3-4-4s-7 0-7-4c0-4 4-8 10-9z" fill="#b9d7ea" stroke="#7aa9c8" />
                <circle cx="5" cy="13" r="2" fill="#e0443e" />
                <circle cx="8.500" cy="9.500" r="2" fill="#6abf4b" />
                <circle cx="14" cy="7.500" r="2" fill="#f0b52c" />
                <circle cx="11" cy="15" r="1.800" fill="#1b2730" />
                <path d="M22 4L13.500 22.500" stroke="#d98a3a" strokeWidth="2" />
                <path d="M18.500 0l6 1-1.500 5-3.500-1z" fill="#c9a06a" />
            </svg>
        ),
    },
];

function Taskbar() {
    return (
        <div className="flex h-10 shrink-0 bg-[#040404] font-['Noto_Sans',sans-serif] text-white">
            <button type="button" aria-label="Start" className="flex w-12 items-center justify-center">
                <svg width="16" height="16" viewBox="0 0 16 16">
                    <path d="M0 2l6.500-1v6.500H0zM7.500 1L16 0v7.500H7.500zM0 8.500h6.500V15L0 14zM7.500 8.500H16V16l-8.500-1z" fill="#fff" />
                </svg>
            </button>
            <input
                type="text"
                aria-label="Search"
                placeholder="Search the web and Windows"
                className="w-[344px] bg-[#333] pl-3 text-[14px] placeholder:text-[#9b9b9b]"
            />
            <div className="flex gap-px pl-px">
                {apps.map((app) => (
                    <button
                        key={app.name}
                        type="button"
                        aria-label={app.name}
                        className={clsx("flex w-12 flex-col items-center", app.active && "bg-[#3a3a3a]")}
                    >
                        <span className="flex flex-1 items-center">{app.icon}</span>
                        <span className={clsx("h-0.5", app.active ? "w-full" : "w-10", app.open && "bg-[#76b9ed]")} />
                    </button>
                ))}
            </div>
            <div className="ml-auto flex items-center">
                <svg width="140" height="20" viewBox="0 0 140 20">
                    <path d="M1 13l5.500-5.500L12 13" fill="none" stroke="#fff" strokeWidth="1.400" />
                    <path d="M27.500 6.500h10v7h-10M25 4v2M28 4v2M24 6.500h5v2.500c0 2-5 2-5 0zM26.500 10.500v3h2" fill="none" stroke="#fff" />
                    <path d="M29.500 8.500h6.500v3h-6.500zM38 8.500h1.500v3H38z" fill="#fff" />
                    <path d="M48 13c-1-3 1-4 2-4 0-4 5-5 7-3 3 0 4 2 4 4l-1 4H49z" fill="#e8e8e8" />
                    <path d="M52 13c0-3 2-4 4-4" stroke="#777" fill="none" />
                    <circle cx="59" cy="13" r="4" fill="#fff" />
                    <path d="M56.500 13a2.500 2.500 0 0 1 4.500-1.500M61.500 13a2.500 2.500 0 0 1-4.500 1.500" stroke="#1a66d6" strokeWidth="1.500" fill="none" />
                    <path d="M75 17C75 9 80 4 86 4M78 17c0-6 3-9 8-9M81 17c0-3 2-5 5-5" stroke="#777" strokeWidth="1.400" fill="none" />
                    <rect x="84" y="14" width="2.500" height="3" fill="#aaa" />
                    <rect x="71" y="9" width="8" height="8" rx="1" fill="#d81e2c" />
                    <path d="M73 11l4 4M77 11l-4 4" stroke="#fff" strokeWidth="1.300" />
                    <path d="M95.500 8.500h2l4-4v11l-4-4h-2zM104 8l4 4.500M108 8l-4 4.500" fill="none" stroke="#fff" strokeWidth="1.100" />
                    <path d="M119 3h15v11h-9l-4 3v-3h-2z" fill="#fff" />
                    <path d="M121 6h11M121 8.500h8M121 11h6" stroke="#222" />
                    <circle cx="131" cy="13" r="4.500" fill="#000" />
                    <circle cx="131" cy="13" r="3.500" fill="none" stroke="#fff" strokeWidth="1.200" />
                    <path d="M129 13h4" stroke="#fff" />
                </svg>
                <div className="mx-1 w-[62px] whitespace-nowrap text-center font-['Roboto','Noto_Sans',sans-serif] text-[12px] leading-[17px]">
                    <div>1:56 PM</div>
                    <div>10/14/2018</div>
                </div>
                <div className="h-full w-[5px] border-l border-[#555]" />
            </div>
        </div>
    );
}

export default function App() {
    return (
        <div className="flex h-screen flex-col overflow-hidden bg-[#f0f0f0] font-['DejaVu_Sans_Condensed','Noto_Sans',sans-serif] text-[11px] leading-[14px] text-black">
            <TitleBar />
            <MenuBar />
            <Toolbar />
            <main className="flex min-h-0 flex-1">
                <Explorer />
                <div className="ml-1 mr-[3px] flex min-w-0 flex-1 flex-col pt-[7px]">
                    <Listing />
                    <MessageViewer />
                </div>
            </main>
            <StatusBar />
            <Taskbar />
        </div>
    );
}
